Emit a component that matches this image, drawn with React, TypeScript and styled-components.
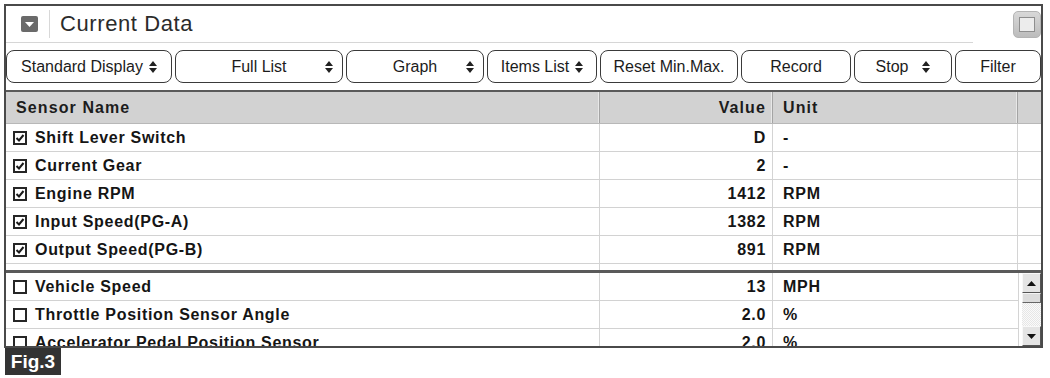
import React from 'react';
import styled, { createGlobalStyle } from 'styled-components';

const GlobalStyle = createGlobalStyle`
  body {
    margin: 0;
    background: #ffffff;
    font-family: "Liberation Sans", Arial, sans-serif;
    color: #1a1a1a;
  }
`

const Page = styled.div`
  width: 1050px;
  height: 378px;
  padding: 4px 0 0 4px;
  box-sizing: border-box;
`

const Frame = styled.div`
  width: 1039px;
  height: 344px;
  box-sizing: border-box;
  border: 2px solid #4a4a4a;
  display: flex;
  flex-direction: column;
  overflow: hidden;
`

const TitleBar = styled.div`
  display: flex;
  align-items: center;
  height: 37px;
  flex-shrink: 0;
`

const TitleMain = styled.div`
  width: 967px;
  height: 36px;
  display: flex;
  align-items: center;
  padding-left: 15px;
  box-sizing: border-box;
  border-bottom: 1px solid #d6d6d6;
`

const Collapse = styled.div`
  width: 17px;
  height: 16px;
  border-radius: 2px;
  background: #6a6a6a;
  display: flex;
  align-items: center;
  justify-content: center;
`

const TitleSep = styled.div`
  width: 1px;
  height: 28px;
  background: #d8d8d8;
  margin: 0 10px 0 11px;
`

const Title = styled.h1`
  margin: 0;
  font-size: 22px;
  font-weight: 400;
  color: #2b2b2b;
  letter-spacing: 0.6px;
`

const CornerBtn = styled.div`
  margin-left: auto;
  width: 28px;
  height: 27px;
  box-sizing: border-box;
  border-radius: 5px;
  border: 1px solid #b4b4b4;
  background: linear-gradient(#d8d8d8, #bcbcbc);
  display: flex;
  align-items: center;
  justify-content: center;
  span {
    width: 16px;
    height: 15px;
    box-sizing: border-box;
    border: 1px solid #8e8e8e;
    background: #ececec;
  }
`

const Toolbar = styled.div`
  display: flex;
  gap: 3px;
  margin-top: 7px;
  height: 33px;
  flex-shrink: 0;
`

const ToolButton = styled.div<{ $w: number; $split?: boolean; $gap?: number }>`
  width: ${({ $w }) => $w}px;
  height: 33px;
  box-sizing: border-box;
  border: 1.5px solid #3a3a3a;
  border-radius: 8px;
  background: #fff;
  font-size: 16px;
  color: #1c1c1c;
  display: ${({ $split }) => ($split ? 'grid' : 'flex')};
  grid-template-columns: 1fr auto 1fr;
  align-items: center;
  justify-content: center;
  gap: ${({ $gap }) => $gap ?? 6}px;
  padding: 0 9px;
  white-space: nowrap;
  > svg:last-child {
    justify-self: end;
  }
`

const Header = styled.div`
  margin-top: 7px;
  border-top: 2px solid #5a5a5a;
  border-bottom: 1px solid #b8b8b8;
  background: #d2d2d2;
  display: grid;
  grid-template-columns: 594px 173px 245px 1fr;
  height: 31px;
  flex-shrink: 0;
`

const HeadCell = styled.div<{ $right?: boolean }>`
  display: flex;
  align-items: center;
  justify-content: ${({ $right }) => ($right ? 'flex-end' : 'flex-start')};
  padding: 0 ${({ $right }) => ($right ? '6px' : '10px')};
  font-weight: 700;
  font-size: 16px;
  letter-spacing: 1.1px;
  color: #1c1c1c;
  border-right: 1px solid #a4a4a4;
  box-shadow: inset -1px 0 0 #e8e8e8;
  &:last-child {
    border-right: none;
    box-shadow: none;
  }
`

const Section = styled.div`
  flex-shrink: 0;
`

const Row = styled.div<{ $tail?: boolean; $filler?: boolean }>`
  display: grid;
  grid-template-columns: 594px 173px 245px ${({ $tail }) => ($tail ? '1fr' : '')};
  height: ${({ $filler }) => ($filler ? 6 : 28)}px;
  box-sizing: border-box;
  border-bottom: ${({ $filler }) => ($filler ? 'none' : '1px solid #d2d2d2')};
`

const Cell = styled.div<{ $right?: boolean; $pad?: number }>`
  display: flex;
  align-items: center;
  gap: 8px;
  justify-content: ${({ $right }) => ($right ? 'flex-end' : 'flex-start')};
  padding: 0 ${({ $right }) => ($right ? '6px' : '0')} 0 ${({ $pad }) => $pad ?? 0}px;
  border-right: 1px solid #d4d4d4;
  font-weight: 700;
  font-size: 16px;
  letter-spacing: 0.7px;
  color: #151515;
  white-space: nowrap;
  overflow: hidden;
  &:last-child {
    border-right: none;
  }
`

const Lower = styled.div`
  flex: 1;
  display: flex;
  border-top: 3px solid #5a5a5a;
  overflow: hidden;
`

const LowerRows = styled.div`
  width: 1012px;
  flex-shrink: 0;
`

const ScrollBar = styled.div`
  flex: 1;
  display: flex;
  flex-direction: column;
  padding-left: 3px;
  border-left: 1px solid #d4d4d4;
`

const ArrowBtn = styled.div`
  height: 20px;
  flex-shrink: 0;
  box-sizing: border-box;
  background: #e4e4e4;
  border: 1px solid;
  border-color: #f8f8f8 #555 #555 #f8f8f8;
  display: flex;
  align-items: center;
  justify-content: center;
`

const Thumb = styled.div`
  height: 10px;
  flex-shrink: 0;
  box-sizing: border-box;
  background: #dcdcdc;
  border: 1px solid;
  border-color: #f4f4f4 #666 #666 #f4f4f4;
`

const Track = styled.div`
  flex: 1;
  min-height: 22px;
  background: repeating-conic-gradient(#e6e6e6 0 25%, #fafafa 0 50%) 0 0 / 2px 2px;
`

const FigTag = styled.div`
  width: 56px;
  height: 27px;
  margin-left: 1px;
  background: #333;
  color: #fff;
  font-weight: 700;
  font-size: 19px;
  display: flex;
  align-items: center;
  justify-content: center;
`

const Box = styled.span`
  width: 14px;
  height: 14px;
  box-sizing: border-box;
  border: 2px solid #262626;
  display: flex;
  align-items: center;
  justify-content: center;
  flex-shrink: 0;
`

const Sort = () => (
  <svg width="8" height="12" viewBox="0 0 8 12">
    <path d="M4 0 L8 5 H0 Z M0 7 H8 L4 12 Z" fill="#222" />
  </svg>
)

const Check = ({ on }: { on: boolean }) => (
  <Box>
    {on && (
      <svg width="10" height="10" viewBox="0 0 10 10">
        <path d="M1.5 5 L4 7.5 L8.5 2" stroke="#1a1a1a" strokeWidth="2" fill="none" />
      </svg>
    )}
  </Box>
)

const Arrow = ({ down }: { down?: boolean }) => (
  <svg width="9" height="5" viewBox="0 0 9 5">
    <path d={down ? 'M0 0 H9 L4.5 5 Z' : 'M4.5 0 L9 5 H0 Z'} fill="#111" />
  </svg>
)

const pinned = [
  ['Shift Lever Switch', 'D', '-'],
  ['Current Gear', '2', '-'],
  ['Engine RPM', '1412', 'RPM'],
  ['Input Speed(PG-A)', '1382', 'RPM'],
  ['Output Speed(PG-B)', '891', 'RPM'],
]

const others = [
  ['Vehicle Speed', '13', 'MPH'],
  ['Throttle Position Sensor Angle', '2.0', '%'],
  ['Accelerator Pedal Position Sensor', '2.0', '%'],
]

const App = () => {
  return <Page>
    <GlobalStyle />
    <Frame>
      <TitleBar>
        <TitleMain>
          <Collapse>
            <svg width="9" height="5" viewBox="0 0 9 5"><path d="M0 0 H9 L4.5 5 Z" fill="#fff" /></svg>
          </Collapse>
          <TitleSep />
          <Title>Current Data</Title>
        </TitleMain>
        <CornerBtn><span /></CornerBtn>
      </TitleBar>

      <Toolbar>
        <ToolButton $w={166}>Standard Display <Sort /></ToolButton>
        <ToolButton $w={168} $split><span />Full List<Sort /></ToolButton>
        <ToolButton $w={138} $split><span />Graph<Sort /></ToolButton>
        <ToolButton $w={110}>Items List <Sort /></ToolButton>
        <ToolButton $w={138}>Reset Min.Max.</ToolButton>
        <ToolButton $w={110}>Record</ToolButton>
        <ToolButton $w={98} $gap={14}>Stop <Sort /></ToolButton>
        <ToolButton $w={86}>Filter</ToolButton>
      </Toolbar>

      <Header>
        <HeadCell>Sensor Name</HeadCell>
        <HeadCell $right>Value</HeadCell>
        <HeadCell>Unit</HeadCell>
        <HeadCell />
      </Header>

      <Section>
        {pinned.map(([name, value, unit]) => (
          <Row key={name} $tail>
            <Cell $pad={7}><Check on />{name}</Cell>
            <Cell $right>{value}</Cell>
            <Cell $pad={10}>{unit}</Cell>
            <Cell />
          </Row>
        ))}
        <Row $tail $filler>
          <Cell /><Cell /><Cell /><Cell />
        </Row>
      </Section>

      <Lower>
        <LowerRows>
          {others.map(([name, value, unit]) => (
            <Row key={name}>
              <Cell $pad={7}><Check on={false} />{name}</Cell>
              <Cell $right>{value}</Cell>
              <Cell $pad={10}>{unit}</Cell>
            </Row>
          ))}
        </LowerRows>
        <ScrollBar>
          <ArrowBtn><Arrow /></ArrowBtn>
          <Thumb />
          <Track />
          <ArrowBtn><Arrow down /></ArrowBtn>
        </ScrollBar>
      </Lower>
    </Frame>
    <FigTag>Fig.3</FigTag>
  </Page>
}

export default App;
